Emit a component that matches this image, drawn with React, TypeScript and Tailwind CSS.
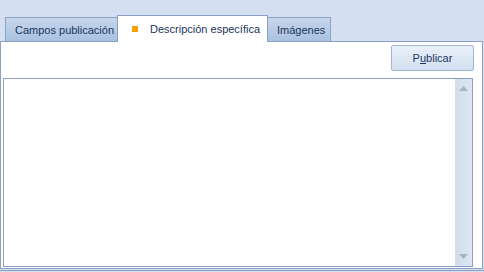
import React from "react";

export default function App() {
  return (
    <div
      className="w-[484px] h-[272px] bg-[#d4e0f1] flex flex-col overflow-hidden text-[11px] text-[#1b355c]"
      style={{ fontFamily: "'Liberation Sans', Arial, sans-serif" }}
    >
      {/* tab strip */}
      <div className="h-[41px] flex items-end pl-[5px] shrink-0">
        <div className="h-[24px] w-[112px] border-l border-t border-[#8ba1c4] bg-gradient-to-b from-[#c6d6ec] to-[#a9c1e0] flex items-center pl-[9px] pt-[2px]">
          Campos publicación
        </div>
        <div className="relative z-10 h-[27px] -mb-[1px] w-[151px] border-x border-t border-[#8ba1c4] bg-white flex items-center pl-[14px] pt-[1px]">
          <span className="w-[6px] h-[6px] bg-[#f7a100] mr-[12px] -mt-[1px]" />
          Descripción específica
        </div>
        <div className="h-[24px] w-[63px] border-r border-t border-[#8ba1c4] bg-gradient-to-b from-[#c6d6ec] to-[#a9c1e0] flex items-center pl-[9px] pt-[2px]">
          Imágenes
        </div>
      </div>

      {/* panel */}
      <div className="w-[483px] h-[228px] border border-[#8ba1c4] bg-white flex flex-col shrink-0">
        <div className="flex justify-end pt-[3px] pr-[8px]">
          <button className="w-[83px] h-[26px] border border-[#a2b5d2] rounded-[2px] bg-gradient-to-b from-[#e9f0fa] to-[#d2dff0] text-[#1b355c] flex items-center justify-center pt-[1px]">
            P<span className="underline">u</span>blicar
          </button>
        </div>
        <div className="mt-[7px] ml-[2px] mr-[9px] mb-[1px] flex-1 border border-[#8ba1c4] flex">
          <div className="flex-1" />
          <div className="w-[17px] bg-gradient-to-r from-[#d0ddee] to-[#dde7f4] flex flex-col items-center justify-between py-[7px]">
            <svg width="9" height="5" viewBox="0 0 9 5">
              <path d="M4.5 0 L9 5 L0 5 Z" fill="#a9b4c2" />
            </svg>
            <svg width="9" height="5" viewBox="0 0 9 5">
              <path d="M0 0 L9 0 L4.5 5 Z" fill="#a9b4c2" />
            </svg>
          </div>
        </div>
      </div>
      <div className="mt-[1px] h-[1px] w-[484px] bg-[#8ba1c4] shrink-0" />
    </div>
  );
}
